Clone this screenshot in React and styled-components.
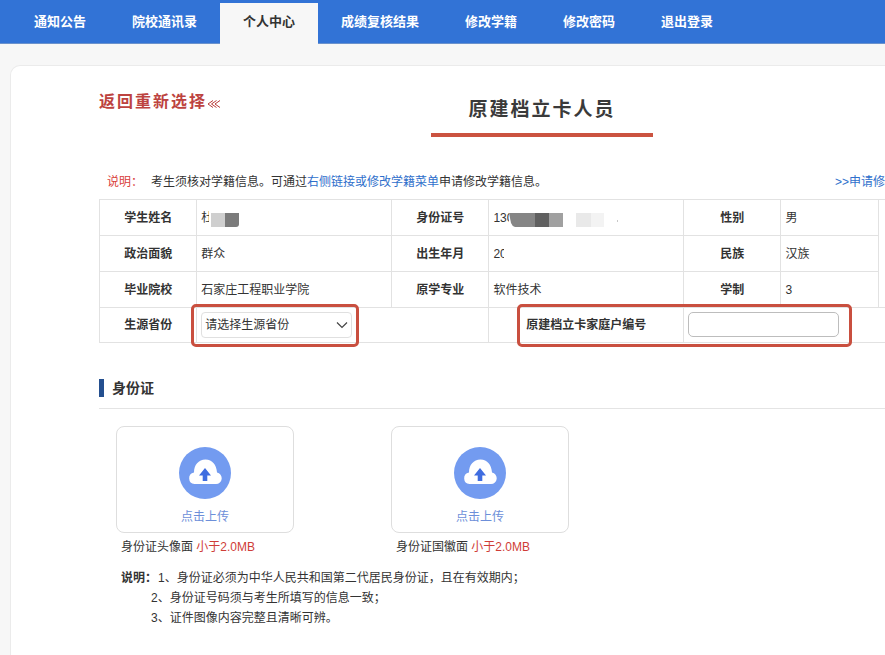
import React from "react";
import styled, { createGlobalStyle } from "styled-components";

const GlobalStyle = createGlobalStyle`
  *, *::before, *::after { box-sizing: border-box; }
  body {
    margin: 0;
    background: #f7f7f7;
    color: #333;
    font-family: "Liberation Sans", "Noto Sans CJK SC", sans-serif;
    font-size: 12px;
    line-height: 20px;
  }
`;

const Shell = styled.div`
  display: flex;
  flex-direction: column;
  min-height: 100vh;
  overflow: hidden;
`;

const Nav = styled.nav`
  display: flex;
  align-items: flex-end;
  min-width: 1084px;
  height: 44px;
  padding: 0 11px;
  background: #3273d6;
  border-bottom: 1px solid #6b92cc;
`;

const Tab = styled.a`
  height: 41px;
  margin-bottom: -1px;
  padding: 0 23px;
  background: ${(p) => (p.$active ? "#f7f7f7" : "transparent")};
  color: ${(p) => (p.$active ? "#333" : "#fff")};
  font-size: 13px;
  font-weight: 700;
  line-height: 37px;
  text-decoration: none;
  white-space: nowrap;
`;

const Card = styled.main`
  flex: 1;
  min-width: 1064px;
  margin: 21px 10px 0;
  padding: 24px 88px 26px;
  background: #fff;
  border: 1px solid #ebebeb;
  border-bottom: 0;
  border-radius: 10px 10px 0 0;
`;

const Header = styled.header`
  display: grid;
  grid-template-columns: 1fr auto 1fr;
  align-items: start;
`;

const BackLink = styled.a`
  display: flex;
  align-items: center;
  color: #bd4340;
  font-size: 16px;
  font-weight: 700;
  line-height: 24px;
  letter-spacing: 2px;
  text-decoration: none;
`;

const Arrows = styled.svg`
  width: 14px;
  height: 10px;
  margin-top: 4px;
`;

const Title = styled.h1`
  width: 222px;
  margin: 0;
  padding: 6px 0 9px;
  border-bottom: 4px solid #cb5340;
  color: #3a3a3a;
  font-size: 19px;
  font-weight: 700;
  line-height: 28px;
  letter-spacing: 2px;
  text-align: center;
`;

const Notice = styled.div`
  display: flex;
  justify-content: space-between;
  margin: 35px 0 7px;
  padding-left: 8px;
`;

const NoticeText = styled.p`
  margin: 0;
  a { color: #2f6fcb; text-decoration: none; }
`;

const NoticeTag = styled.span`
  margin-right: 8px;
  color: #d9403a;
`;

const ApplyLink = styled.a`
  width: 150px;
  color: #2f6fcb;
  text-decoration: none;
  white-space: nowrap;
`;

const InfoTable = styled.table`
  width: 100%;
  border-collapse: collapse;
  table-layout: fixed;
  th, td { height: 36px; padding: 0 4px; border: 1px solid #e2e2e2; }
  th { font-weight: 700; text-align: center; }
`;

const FormRow = styled.tr`
  && > * { height: 35px; }
`;

const Col = styled.col`
  width: ${(p) => p.$w}%;
`;

const Masked = styled.span`
  display: flex;
  align-items: center;
  height: 20px;
`;

const Partial = styled.span`
  width: ${(p) => p.$w}px;
  overflow: hidden;
  white-space: nowrap;
`;

const Mosaic = styled.svg`
  height: 14px;
  margin-top: 5px;
`;

const Marked = styled.div`
  position: relative;
  width: 151px;
  height: 26px;
  &::after {
    content: "";
    position: absolute;
    inset: -8px -7px -9px ${(p) => (p.$wide ? "-171px" : "-10px")};
    border: 3px solid #c94f3f;
    border-radius: 5px;
    pointer-events: none;
  }
`;

const SelectBox = styled(Marked)`
  svg { position: absolute; right: 4px; top: 9px; pointer-events: none; }
`;

const Select = styled.select`
  display: block;
  width: 100%;
  height: 26px;
  padding: 0 20px 0 3px;
  appearance: none;
  background: #fff;
  border: 1px solid #e0e0e0;
  border-radius: 4px;
  color: #333;
  font: inherit;
`;

const InputBox = styled(Marked)`
  &::after { right: -13px; }
`;

const Input = styled.input`
  display: block;
  width: 100%;
  height: 25px;
  padding: 0 6px;
  background: #fff;
  border: 1px solid #bdbdbd;
  border-radius: 5px;
  font: inherit;
`;

const Section = styled.section`
  margin-top: 34px;
`;

const SectionHead = styled.div`
  display: flex;
  align-items: center;
  gap: 8px;
  padding-bottom: 9px;
  border-bottom: 1px solid #e4e4e4;
  &::before { content: ""; width: 5px; height: 18px; background: #244f8f; }
`;

const SectionTitle = styled.h2`
  margin: 0;
  font-size: 14px;
  font-weight: 700;
  line-height: 22px;
`;

const Uploads = styled.div`
  display: flex;
  gap: 97px;
  padding: 17px 17px 0;
`;

const UploadItem = styled.div`
  width: 178px;
`;

const UploadButton = styled.button`
  display: flex;
  flex-direction: column;
  align-items: center;
  width: 100%;
  height: 107px;
  padding: 20px 0 0;
  background: #fff;
  border: 1px solid #dedede;
  border-radius: 8px;
  color: #6d8fd9;
  font-family: "Noto Sans CJK SC", sans-serif;
  font-size: 12px;
  line-height: 18px;
  cursor: pointer;
  svg { margin-bottom: 8px; }
`;

const Caption = styled.p`
  margin: 4px 0 0;
  padding-left: 5px;
`;

const Limit = styled.span`
  color: #cf3d37;
`;

const Notes = styled.div`
  display: flex;
  margin: 11px 0 0 22px;
`;

const NoteList = styled.ol`
  margin: 0;
  padding: 0;
  list-style: none;
  li:first-child { padding-left: 7px; }
`;

const NoteLabel = styled.strong`
  width: 30px;
  white-space: nowrap;
`;

const tabs = ["通知公告", "院校通讯录", "个人中心", "成绩复核结果", "修改学籍", "修改密码", "退出登录"];
const columns = [11, 22, 11, 22, 11, 11, 12];

function CloudUpload() {
  return (
    <svg width="52" height="52" viewBox="0 0 52 52" aria-hidden="true">
      <circle cx="26" cy="26" r="26" fill="#739bf0" />
      <path
        d="M15.500 37a5.800 5.800 0 0 1-.5-11.500C15 18 19.500 12.500 26.500 12.500S37.500 18 38 25.500a5.800 5.800 0 0 1-1 11.500Z"
        fill="#fff"
      />
      <path d="M26 21l6 7.500h-3.700V34h-4.600v-5.500H20Z" fill="#3f6de0" />
    </svg>
  );
}

function Upload({ name }) {
  return (
    <UploadItem>
      <UploadButton type="button" aria-label={name + " 点击上传"}>
        <CloudUpload />
        点击上传
      </UploadButton>
      <Caption>
        {name} <Limit>小于2.0MB</Limit>
      </Caption>
    </UploadItem>
  );
}

export default function App() {
  return (
    <Shell>
      <GlobalStyle />
      <Nav>
        {tabs.map((t, i) => (
          <Tab key={t} href="#" $active={i === 2}>{t}</Tab>
        ))}
      </Nav>
      <Card>
        <Header>
          <BackLink href="#">
            返回重新选择
            <Arrows viewBox="0 0 14 10" fill="none" stroke="#b93a38" aria-hidden="true">
              <path d="M6 1.500 1 5l5 3.500M9.500 1.500l-5 3.500 5 3.500M13 1.500 8 5l5 3.500" />
            </Arrows>
          </BackLink>
          <Title>原建档立卡人员</Title>
        </Header>
        <Notice>
          <NoticeText>
            <NoticeTag>说明：</NoticeTag>
            考生须核对学籍信息。可通过<a href="#">右侧链接或修改学籍菜单</a>申请修改学籍信息。
          </NoticeText>
          <ApplyLink href="#">&gt;&gt;申请修改学籍</ApplyLink>
        </Notice>
        <InfoTable>
          <colgroup>
            {columns.map((w, i) => <Col key={i} $w={w} />)}
          </colgroup>
          <tbody>
            <tr>
              <th scope="row">学生姓名</th>
              <td>
                <Masked>
                  <Partial $w={8}>杜</Partial>
                  <Mosaic width="30" viewBox="0 0 30 14" aria-hidden="true">
                    <path d="M2 0h14v14H2z" fill="#cfcfcf" />
                    <path d="M16 0h14v11q0 3-3 3H16z" fill="#7b7b7b" />
                  </Mosaic>
                </Masked>
              </td>
              <th scope="row">身份证号</th>
              <td>
                <Masked>
                  <Partial $w={16}>130</Partial>
                  <Mosaic width="110" viewBox="0 0 110 14" aria-hidden="true">
                    <path d="M0 0h26v14H6Q3 13 2 10Z" fill="#858585" />
                    <path d="M26 0h14v14H26z" fill="#606060" />
                    <path d="M40 0h14v14H40z" fill="#a0a0a0" />
                    <path d="M67 0h15v14H67z" fill="#e9e9e9" />
                    <path d="M82 0h13v14H82z" fill="#f3f3f3" />
                    <path d="M108 7h1v2h-1z" fill="#c8c8c8" />
                  </Mosaic>
                </Masked>
              </td>
              <th scope="row">性别</th>
              <td>男</td>
              <td rowSpan={3} />
            </tr>
            <tr>
              <th scope="row">政治面貌</th>
              <td>群众</td>
              <th scope="row">出生年月</th>
              <td><Masked><Partial $w={11}>20</Partial></Masked></td>
              <th scope="row">民族</th>
              <td>汉族</td>
            </tr>
            <tr>
              <th scope="row">毕业院校</th>
              <td>石家庄工程职业学院</td>
              <th scope="row">原学专业</th>
              <td>软件技术</td>
              <th scope="row">学制</th>
              <td>3</td>
            </tr>
            <FormRow>
              <th scope="row"><label htmlFor="province">生源省份</label></th>
              <td colSpan={2}>
                <SelectBox>
                  <Select id="province" defaultValue="">
                    <option value="">请选择生源省份</option>
                  </Select>
                  <svg width="12" height="8" viewBox="0 0 12 8" fill="none" stroke="#444" strokeWidth="1.200" aria-hidden="true">
                    <path d="M1 1.500l5 5 5-5" />
                  </svg>
                </SelectBox>
              </td>
              <th scope="row"><label htmlFor="family">原建档立卡家庭户编号</label></th>
              <td colSpan={3}>
                <InputBox $wide><Input id="family" type="text" /></InputBox>
              </td>
            </FormRow>
          </tbody>
        </InfoTable>
        <Section>
          <SectionHead><SectionTitle>身份证</SectionTitle></SectionHead>
          <Uploads>
            <Upload name="身份证头像面" />
            <Upload name="身份证国徽面" />
          </Uploads>
          <Notes>
            <NoteLabel>说明：</NoteLabel>
            <NoteList>
              <li>1、身份证必须为中华人民共和国第二代居民身份证，且在有效期内；</li>
              <li>2、身份证号码须与考生所填写的信息一致；</li>
              <li>3、证件图像内容完整且清晰可辨。</li>
            </NoteList>
          </Notes>
        </Section>
      </Card>
    </Shell>
  );
}
